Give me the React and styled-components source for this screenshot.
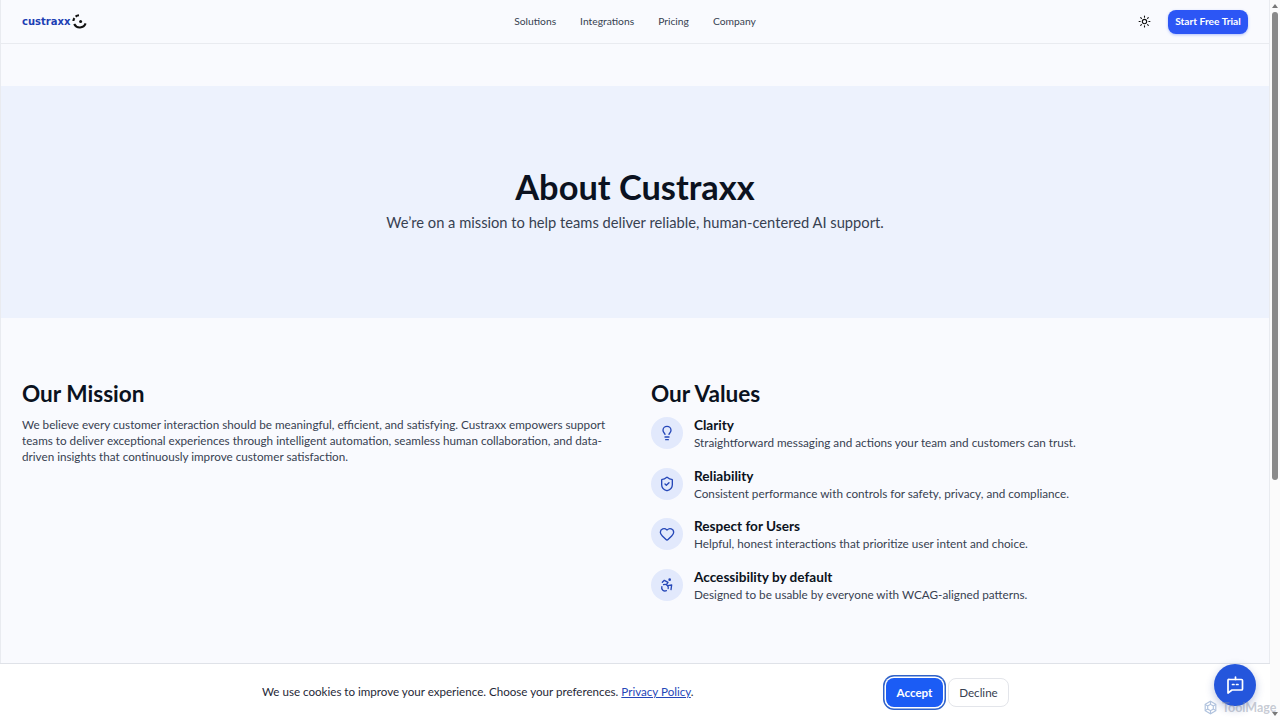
import styled, { createGlobalStyle } from 'styled-components';
import { Sun, Lightbulb, ShieldCheck, Heart, Accessibility } from 'lucide-react';

const GlobalStyle = createGlobalStyle`
  html, body {
    margin: 0;
    height: 100%;
    overflow: hidden;
  }
  body {
    font-family: Lato, "Noto Sans", sans-serif;
    background: #f9fafe;
    color: #0b1220;
  }
  * { box-sizing: border-box; }
`;

const Frame = styled.div`
  display: flex;
  width: 1280px;
  height: 720px;
  overflow: hidden;
`;
const Page = styled.div`
  width: 1270px;
  height: 720px;
  border-left: 1px solid #e9ebf0;
  border-right: 1px solid #e9ebf0;
`;
const Scrollbar = styled.div`
  width: 10px;
  height: 720px;
  background: #fbfbfb;
  display: flex;
  flex-direction: column;
  align-items: center;
`;
const ArrowUp = styled.div`
  margin-top: 4px;
  width: 0;
  height: 0;
  border-left: 3px solid transparent;
  border-right: 3px solid transparent;
  border-bottom: 4px solid #777;
`;
const ArrowDown = styled.div`
  margin-top: auto;
  margin-bottom: 4px;
  width: 0;
  height: 0;
  border-left: 3px solid transparent;
  border-right: 3px solid transparent;
  border-top: 4px solid #777;
`;
const Thumb = styled.div`
  margin-top: 4px;
  width: 6px;
  height: 468px;
  background: #8a8a8a;
  border-radius: 3px;
`;

const Header = styled.header`
  height: 44px;
  display: grid;
  grid-template-columns: 1fr auto 1fr;
  align-items: center;
  padding: 0 21px;
  border-bottom: 1px solid #e9ebf0;
`;
const Logo = styled.div`
  display: flex;
  align-items: center;
  gap: 2px;
`;
const LogoText = styled.span`
  font-family: "DejaVu Sans", sans-serif;
  font-size: 10px;
  font-weight: 700;
  color: #1d3fb4;
`;
const Nav = styled.nav`
  display: flex;
  gap: 24px;
  margin-bottom: 2px;
`;
const NavLink = styled.a`
  font-size: 10.3px;
  font-weight: 400;
  color: #374151;
`;
const HeaderActions = styled.div`
  display: flex;
  align-items: center;
  justify-content: flex-end;
  gap: 17px;
`;
const TrialButton = styled.button`
  height: 24px;
  width: 80px;
  border: 0;
  border-radius: 8px;
  padding: 0 0 1px;
  background: #2c56f5;
  color: #fff;
  font-family: Lato, sans-serif;
  font-size: 10.2px;
  font-weight: 700;
  box-shadow: 0 1px 3px rgba(44, 86, 245, 0.35);
`;

const Hero = styled.section`
  margin-top: 42px;
  height: 232px;
  background: #edf2fd;
  display: flex;
  flex-direction: column;
  align-items: center;
  padding-top: 79px;
`;
const HeroTitle = styled.h1`
  margin: 0;
  font-size: 34.4px;
  line-height: 44px;
  font-weight: 700;
  color: #0b1220;
`;
const HeroText = styled.p`
  margin: 2px 0 0;
  font-size: 14.7px;
  line-height: 22px;
  color: #374151;
`;

const Columns = styled.section`
  display: grid;
  grid-template-columns: 587px 1fr;
  column-gap: 42px;
  padding: 62px 21px 0;
`;
const SectionTitle = styled.h2`
  margin: 0 0 9px;
  font-size: 22.6px;
  line-height: 28px;
  font-weight: 700;
  color: #0b1220;
`;
const Paragraph = styled.p`
  margin: -1px 0 0;
  font-size: 11.7px;
  line-height: 16px;
  color: #374151;
`;
const ValueList = styled.div`
  display: flex;
  flex-direction: column;
  gap: 16.7px;
`;
const ValueRow = styled.div`
  display: flex;
  align-items: flex-start;
  gap: 11px;
  height: 34px;
`;
const IconCircle = styled.div`
  width: 32px;
  height: 32px;
  flex: none;
  border-radius: 50%;
  background: #e2e9fc;
  color: #2547b8;
  display: flex;
  align-items: center;
  justify-content: center;
`;
const ValueBody = styled.div`
  display: flex;
  flex-direction: column;
  margin-top: -1px;
`;
const ValueTitle = styled.h3`
  margin: 0;
  font-size: 13.6px;
  line-height: 18px;
  font-weight: 700;
  color: #0b1220;
`;
const ValueText = styled.p`
  margin: 0;
  font-size: 11.72px;
  line-height: 17px;
  color: #374151;
`;

const CookieBar = styled.div`
  position: absolute;
  left: 0;
  bottom: 0;
  width: 1270px;
  height: 57px;
  background: #fff;
  border-top: 1px solid #dfe2e8;
  display: flex;
  align-items: center;
  padding-left: 262px;
`;
const CookieText = styled.p`
  margin: 0 0 1px;
  width: 624px;
  font-size: 11.6px;
  color: #1f2937;
`;
const PolicyLink = styled.a`
  color: #2547b8;
  text-decoration: underline;
`;
const CookieButton = styled.button`
  height: 29px;
  padding: 0;
  width: ${props => (props.$primary ? '57px' : '61px')};
  margin-right: ${props => (props.$primary ? '5px' : '0')};
  border-radius: 8px;
  font-family: Lato, sans-serif;
  font-size: 11.6px;
  font-weight: ${props => (props.$primary ? 700 : 400)};
  background: ${props => (props.$primary ? '#1b5cf5' : '#fff')};
  color: ${props => (props.$primary ? '#fff' : '#374151')};
  border: ${props => (props.$primary ? '0' : '1px solid #e3e5ea')};
  box-shadow: ${props => (props.$primary ? '0 0 0 1.5px #fff, 0 0 0 3px #2f62c9' : 'none')};
`;
const ChatButton = styled.button`
  position: absolute;
  left: 1214px;
  top: 664px;
  width: 42px;
  height: 42px;
  border: 0;
  padding: 0;
  border-radius: 50%;
  background: #2456dc;
  color: #fff;
  display: flex;
  align-items: center;
  justify-content: center;
  box-shadow: 0 3px 8px rgba(30, 60, 150, 0.3);
`;
const Watermark = styled.div`
  position: absolute;
  left: 1203px;
  top: 700px;
  display: flex;
  align-items: center;
  gap: 4px;
  font-size: 12.5px;
  font-weight: 700;
  color: rgba(130, 140, 160, 0.45);
`;

const values = [
  { icon: <Lightbulb size={16} />, title: 'Clarity', text: 'Straightforward messaging and actions your team and customers can trust.' },
  { icon: <ShieldCheck size={16} />, title: 'Reliability', text: 'Consistent performance with controls for safety, privacy, and compliance.' },
  { icon: <Heart size={16} />, title: 'Respect for Users', text: 'Helpful, honest interactions that prioritize user intent and choice.' },
  { icon: <Accessibility size={16} />, title: 'Accessibility by default', text: 'Designed to be usable by everyone with WCAG-aligned patterns.' },
];

const LogoMark = () => (
  <svg width="15" height="15" viewBox="0 0 15 15" fill="none" stroke="#111" strokeWidth="2.1">
    <path d="M7 1.2A6.2 6.2 0 0 0 3.6 2.6" />
    <path d="M2.4 4.2A6.2 6.2 0 0 0 1.4 7" />
    <path d="M2.2 10A6.2 6.2 0 0 0 13.6 9.4" />
    <circle cx="8.6" cy="7.4" r="1.5" fill="#111" stroke="none" />
  </svg>
);

const ChatIcon = () => (
  <svg width="20" height="20" viewBox="0 0 20 20" fill="none" stroke="currentColor" strokeWidth="1.7" strokeLinejoin="round" strokeLinecap="round">
    <path d="M4.500 4.500h12a1 1 0 0 1 1 1v8.500a1 1 0 0 1-1 1H7l-4 3V5.500a1 1 0 0 1 1.500-1z" />
    <path d="M10.500 2v2.500" />
    <path d="M7.500 9.500h1.500M11.500 9.500H13" />
  </svg>
);

const WatermarkIcon = () => (
  <svg width="15" height="15" viewBox="0 0 24 24" fill="none" stroke="#9db4d6" strokeWidth="1.8" opacity="0.8">
    <path d="M12 2l8.500 5v10L12 22l-8.500-5V7z" />
    <path d="M12 7l4.500 2.500v5L12 17l-4.500-2.500v-5z" />
    <path d="M12 2v5M20.500 7l-4 2.500M20.500 17l-4-2.500M12 22v-5M3.500 17l4-2.500M3.500 7l4 2.500" />
  </svg>
);

const App = () => (
  <Frame>
    <GlobalStyle />
    <Page>
      <Header>
        <Logo>
          <LogoText>custraxx</LogoText>
          <LogoMark />
        </Logo>
        <Nav>
          <NavLink>Solutions</NavLink>
          <NavLink>Integrations</NavLink>
          <NavLink>Pricing</NavLink>
          <NavLink>Company</NavLink>
        </Nav>
        <HeaderActions>
          <Sun size={13} color="#111" />
          <TrialButton>Start Free Trial</TrialButton>
        </HeaderActions>
      </Header>
      <Hero>
        <HeroTitle>About Custraxx</HeroTitle>
        <HeroText>We’re on a mission to help teams deliver reliable, human-centered AI support.</HeroText>
      </Hero>
      <Columns>
        <div>
          <SectionTitle>Our Mission</SectionTitle>
          <Paragraph>
            We believe every customer interaction should be meaningful, efficient, and satisfying. Custraxx empowers support teams to deliver exceptional experiences through intelligent automation, seamless human collaboration, and data-driven insights that continuously improve customer satisfaction.
          </Paragraph>
        </div>
        <div>
          <SectionTitle>Our Values</SectionTitle>
          <ValueList>
            {values.map(value => (
              <ValueRow key={value.title}>
                <IconCircle>{value.icon}</IconCircle>
                <ValueBody>
                  <ValueTitle>{value.title}</ValueTitle>
                  <ValueText>{value.text}</ValueText>
                </ValueBody>
              </ValueRow>
            ))}
          </ValueList>
        </div>
      </Columns>
    </Page>
    <Scrollbar>
      <ArrowUp />
      <Thumb />
      <ArrowDown />
    </Scrollbar>
    <CookieBar>
      <CookieText>
        We use cookies to improve your experience. Choose your preferences. <PolicyLink>Privacy Policy</PolicyLink>.
      </CookieText>
      <CookieButton $primary>Accept</CookieButton>
      <CookieButton>Decline</CookieButton>
    </CookieBar>
    <ChatButton><ChatIcon /></ChatButton>
    <Watermark><WatermarkIcon />ToolMage</Watermark>
  </Frame>
);

export default App;
